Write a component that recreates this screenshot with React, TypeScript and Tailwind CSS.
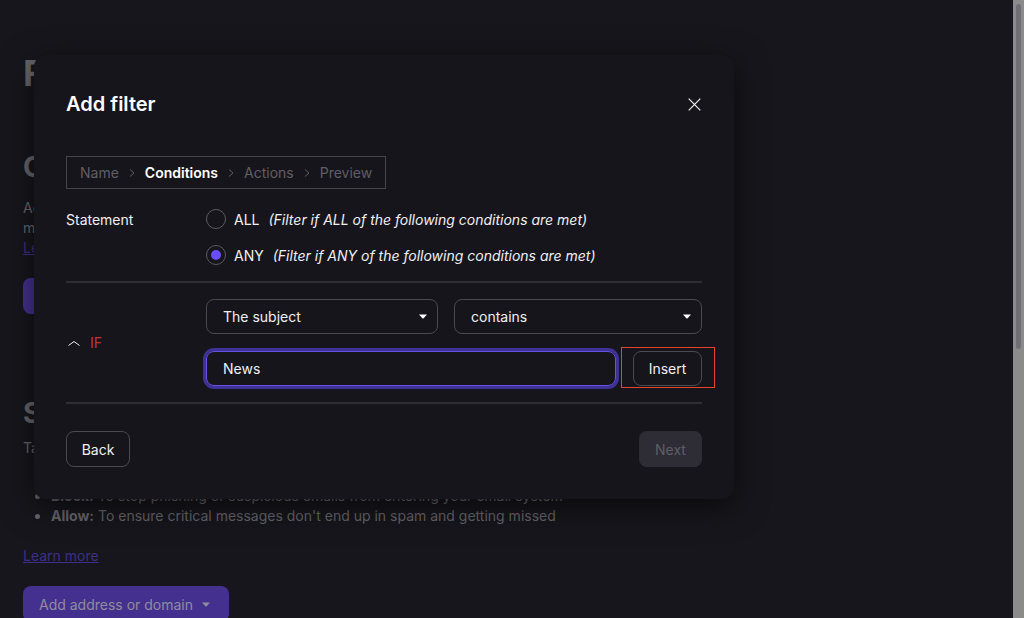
const Caret = ({ className = "" }: { className?: string }) => (
  <svg width="10" height="5" viewBox="0 0 10 5" className={className}>
    <path d="M1 0.5h8L5.4 4.4a.6.6 0 0 1-.8 0z" fill="currentColor" />
  </svg>
);

const Chevron = () => (
  <svg width="8" height="10" viewBox="0 0 8 10" fill="none" stroke="#5f5e66" strokeWidth="1">
    <path d="M2 1.5 6 5 2 8.5" />
  </svg>
);

function Radio({ checked, label, hint }: { checked?: boolean; label: string; hint: string }) {
  return (
    <div className="flex h-5 items-center">
      <span className="flex h-5 w-5 items-center justify-center rounded-full border border-[#5c5b63]">
        {checked && <span className="h-[10px] w-[10px] rounded-full bg-[#6a4dff]" />}
      </span>
      <span className="ml-[8px] text-[#f0f0f2]">{label}</span>
      <em className="ml-[9px] text-[#f0f0f2]">{hint}</em>
    </div>
  );
}

function Select({ value, className }: { value: string; className: string }) {
  return (
    <div className={`flex h-[35px] items-center justify-between rounded-lg border border-[#4a4951] pl-[16px] pr-[9px] text-[#f0f0f2] ${className}`}>
      {value}
      <Caret className="text-white" />
    </div>
  );
}

function Backdrop() {
  return (
    <main className="min-w-0 flex-1 overflow-hidden pl-[23px] text-[14px] text-[#66656b]">
      <h1 className="mt-[51px] text-[36px] font-bold leading-[44px] text-[#66656b]">Filters</h1>
      <h2 className="mt-[55px] text-[28px] font-bold leading-[34px]">Custom filters</h2>
      <p className="mt-[14px] leading-5">Add custom filters</p>
      <p className="leading-5">more</p>
      <a className="block leading-5 text-[#3d2f8a] underline">Learn more</a>
      <div className="mt-[20px] h-[36px] w-[120px] rounded-lg bg-[#44318f]" />
      <h2 className="mt-[82px] text-[28px] font-bold leading-[34px]">Spam</h2>
      <p className="mt-[8px] leading-5">Take control</p>
      <ul className="mt-[28px] list-disc pl-[28px] leading-5">
        <li>
          <b className="font-bold">Block:</b> To stop phishing or suspicious emails from entering your email system
        </li>
        <li>
          <b className="font-bold">Allow:</b> To ensure critical messages don't end up in spam and getting missed
        </li>
      </ul>
      <a className="mt-[20px] block leading-5 text-[#3d2f8a] underline">Learn more</a>
      <div className="mt-[20px] flex h-[36px] w-[206px] items-center rounded-lg bg-[#44318f] pl-[16px] text-[#8f8c9e]">
        Add address or domain
        <Caret className="ml-[8px] text-[#8f8c9e]" />
      </div>
    </main>
  );
}

export default function App() {
  return (
    <div className="relative flex h-[618px] w-[1024px] overflow-hidden bg-[#16161c] font-['Inter',sans-serif] text-[14px]">
      <Backdrop />

      {/* fake scrollbar */}
      <div className="w-[11px] shrink-0 bg-[#8b8b8b] px-[3px] pt-[4px]">
        <div className="h-[345px] rounded-full bg-[#706f75]" />
      </div>

      <div className="absolute left-[34px] top-[55px] w-[700px] rounded-xl bg-[#16151c] px-[32px] pb-[32px] pt-[37px] shadow-[0_8px_32px_rgba(0,0,0,0.55)]">
        <div className="flex items-center justify-between">
          <h3 className="text-[20px] font-semibold leading-[24px] text-white">Add filter</h3>
          <svg width="13" height="13" viewBox="0 0 13 13" fill="none" stroke="#f0f0f2" strokeWidth="1.2" className="mr-[1px]">
            <path d="M.7.7l11.6 11.6M12.3.7.7 12.3" />
          </svg>
        </div>

        <div className="mt-[40px] flex h-[33px] w-[320px] items-center gap-[9px] border border-[#45444c] pl-[13px] text-[#5f5e66]">
          <span>Name</span>
          <Chevron />
          <span className="font-semibold text-white">Conditions</span>
          <Chevron />
          <span>Actions</span>
          <Chevron />
          <span>Preview</span>
        </div>

        <div className="mt-[20px] flex">
          <div className="w-[140px] text-[#f0f0f2]">Statement</div>
          <div className="flex flex-col gap-[16px]">
            <Radio label="ALL" hint="(Filter if ALL of the following conditions are met)" />
            <Radio checked label="ANY" hint="(Filter if ANY of the following conditions are met)" />
          </div>
        </div>

        <div className="mt-[16px] flex items-center border-y-2 border-[#2e2d35] py-[16px]">
          <div className="flex w-[140px] items-center gap-[9px]">
            <svg width="14" height="14" viewBox="0 0 14 14" fill="none" stroke="#f0f0f2" strokeWidth="1" className="ml-[1px]">
              <path d="M1.5 9.5 7 5.5l5.5 4" />
            </svg>
            <span className="text-[#c9322f]">IF</span>
          </div>
          <div className="flex flex-1 flex-col gap-[17px]">
            <div className="flex gap-[16px]">
              <Select value="The subject" className="w-[232px]" />
              <Select value="contains" className="flex-1" />
            </div>
            <div className="flex gap-[17px]">
              <div className="flex h-[35px] flex-1 items-center rounded-lg border border-[#6a4fe8] pl-[16px] text-[#f0f0f2] ring-[3px] ring-[#3f3295]">
                News
              </div>
              <div className="relative flex h-[35px] w-[69px] items-center justify-center rounded-lg border border-[#4a4951] text-[#f0f0f2]">
                Insert
                <span className="absolute -bottom-[3px] -left-[13px] -right-[14px] -top-[5px] border border-[#e8432a]" />
              </div>
            </div>
          </div>
        </div>

        <div className="mt-[27px] flex justify-between">
          <button className="flex h-[36px] w-[64px] items-center justify-center rounded-lg border border-[#4a4951] text-[#f0f0f2]">
            Back
          </button>
          <button className="flex h-[36px] w-[63px] items-center justify-center rounded-lg bg-[#2e2d36] text-[#5f5e66]">
            Next
          </button>
        </div>
      </div>
    </div>
  );
}
